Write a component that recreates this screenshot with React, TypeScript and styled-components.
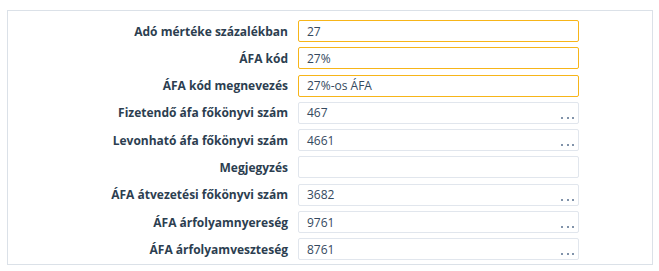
import React from "react";
import styled, { createGlobalStyle } from "styled-components";

const Global = createGlobalStyle`
  html, body { margin: 0; padding: 0; background: #ffffff; }
  body { font-family: "Open Sans", "Noto Sans", sans-serif; }
`;

const Panel = styled.div`
  margin: 10px 0 0 7px;
  width: 646px;
  height: 255px;
  border: 1px solid #dbe1e8;
  box-sizing: border-box;
  padding-top: 9px;
  display: grid;
  grid-template-columns: 280px 281px;
  column-gap: 10px;
  row-gap: 5.3px;
  align-content: start;
`;

const Label = styled.label`
  justify-self: end;
  align-self: center;
  font-size: 12px;
  font-weight: 700;
  color: #2c3e50;
  white-space: nowrap;
`;

const Field = styled.div<{ $required?: boolean }>`
  position: relative;
  height: 22px;
  box-sizing: border-box;
  border: 1px solid ${(p) => (p.$required ? "#f7b519" : "#e1e6ed")};
  border-radius: 2px;
  padding: 0 8px;
  display: flex;
  align-items: center;
  font-size: 12px;
  color: #34495e;
`;

const Dots = styled.span`
  position: absolute;
  right: 4px;
  bottom: 4px;
  display: flex;
  gap: 3.5px;
  & > i {
    width: 2px;
    height: 2px;
    background: #8193aa;
  }
`;

type Row = { label: string; value: string; required?: boolean; lookup?: boolean };

const rows: Row[] = [
  { label: "Adó mértéke százalékban", value: "27", required: true },
  { label: "ÁFA kód", value: "27%", required: true },
  { label: "ÁFA kód megnevezés", value: "27%-os ÁFA", required: true },
  { label: "Fizetendő áfa főkönyvi szám", value: "467", lookup: true },
  { label: "Levonható áfa főkönyvi szám", value: "4661", lookup: true },
  { label: "Megjegyzés", value: "" },
  { label: "ÁFA átvezetési főkönyvi szám", value: "3682", lookup: true },
  { label: "ÁFA árfolyamnyereség", value: "9761", lookup: true },
  { label: "ÁFA árfolyamveszteség", value: "8761", lookup: true },
];

export default function App() {
  return (
    <>
      <Global />
      <Panel>
        {rows.map((r) => (
          <React.Fragment key={r.label}>
            <Label>{r.label}</Label>
            <Field $required={r.required}>
              {r.value}
              {r.lookup && (
                <Dots>
                  <i />
                  <i />
                  <i />
                </Dots>
              )}
            </Field>
          </React.Fragment>
        ))}
      </Panel>
    </>
  );
}
